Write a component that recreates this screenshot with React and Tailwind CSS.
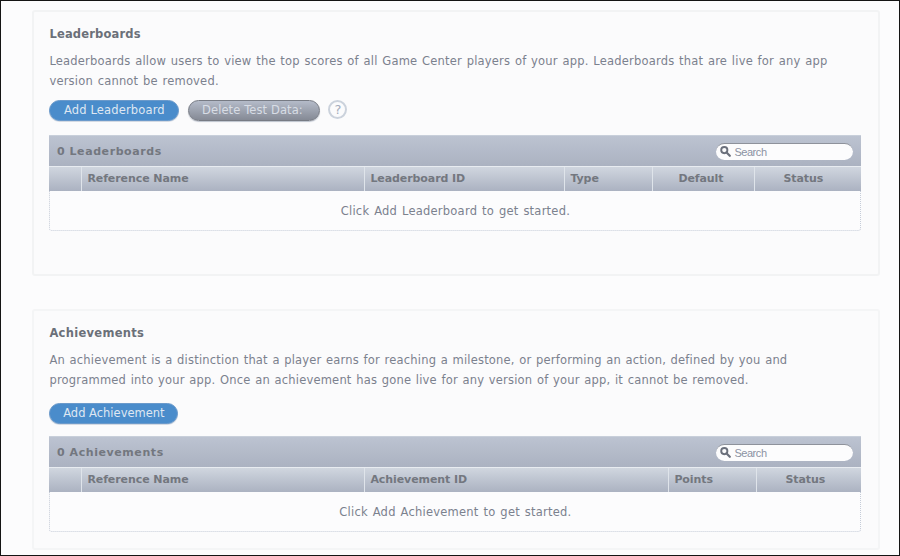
const leaderboards = {
  title: 'Leaderboards',
  titleCls: 'tracking-[0.18px]',
  lines: [
    { text: 'Leaderboards allow users to view the top scores of all Game Center players of your app. Leaderboards that are live for any app', cls: 'tracking-[0.2px] [word-spacing:0.86px]' },
    { text: 'version cannot be removed.', cls: 'tracking-[0.2px] [word-spacing:0.86px]' },
  ],
  count: '0 Leaderboards',
  empty: 'Click Add Leaderboard to get started.',
  grid: 'grid-cols-[32px_283px_200px_88px_102px_106px]',
  columns: [
    { label: '', cls: '' },
    { label: 'Reference Name', cls: 'pl-[5px]' },
    { label: 'Leaderboard ID', cls: 'pl-[5px]' },
    { label: 'Type', cls: 'pl-[5px]' },
    { label: 'Default', cls: 'pl-[25px]' },
    { label: 'Status', cls: 'pl-[28px]' },
  ],
};

const achievements = {
  title: 'Achievements',
  titleCls: 'tracking-[0.3px]',
  lines: [
    { text: 'An achievement is a distinction that a player earns for reaching a milestone, or performing an action, defined by you and', cls: 'tracking-[0.2px] [word-spacing:0.7px]' },
    { text: 'programmed into your app. Once an achievement has gone live for any version of your app, it cannot be removed.', cls: 'tracking-[0.2px] [word-spacing:0.74px]' },
  ],
  count: '0 Achievements',
  empty: 'Click Add Achievement to get started.',
  grid: 'grid-cols-[32px_283px_304px_88px_104px]',
  columns: [
    { label: '', cls: '' },
    { label: 'Reference Name', cls: 'pl-[5px]' },
    { label: 'Achievement ID', cls: 'pl-[5px]' },
    { label: 'Points', cls: 'pl-[5px]' },
    { label: 'Status', cls: 'pl-[28px]' },
  ],
};

function SearchField() {
  return (
    <div className="mr-2 flex h-[17px] w-[137px] items-center rounded-full border-t border-[#8e929b] bg-[#fcfcfd] pl-1">
      <svg width="11" height="11" viewBox="0 0 11 11" fill="none" stroke="#6b707c">
        <circle cx="4.3" cy="4.1" r="3.1" strokeWidth="1.9" />
        <path d="M6.6 6.5L9.8 9.8" strokeWidth="2.2" strokeLinecap="round" />
      </svg>
      <span className="ml-[3px] font-['Liberation_Sans',Arial,sans-serif] text-[11px] leading-[14px] tracking-[-0.45px] text-[#8b92a3]">Search</span>
    </div>
  );
}

function Table({ data }) {
  return (
    <div className="w-[812px]">
      <div className="flex h-[31px] items-center justify-between border-t border-[#c8cfda] bg-linear-to-b from-[#bcc3d1] to-[#abb2c1]">
        <h3 className="pl-[7.5px] pt-[2px] text-[11px] font-bold tracking-[0.58px] text-[#73777f]">{data.count}</h3>
        <SearchField />
      </div>
      <div className={`grid h-[25px] border-t border-[#e8ecf1] bg-linear-to-b from-[#d0d6df] to-[#abb2c1] ${data.grid}`}>
        {data.columns.map((column, i) => (
          <div
            key={i}
            className={`flex items-center whitespace-nowrap pt-px text-[11px] font-bold tracking-[-0.08px] text-[#73777f] ${i ? 'border-l border-[#dfe4ea]' : ''} ${column.cls}`}
          >
            {column.label}
          </div>
        ))}
      </div>
      <div className="flex h-[40px] items-center justify-center rounded-b-[3px] border border-t-0 border-dotted border-[#c5ccd8] bg-[#fcfcfd] pt-[3px] text-[11.5px] tracking-[0.23px] text-[#7b818e] [word-spacing:1px]">
        {data.empty}
      </div>
    </div>
  );
}

function Intro({ data }) {
  return (
    <>
      <h2 className={`text-[11.5px] font-bold leading-[17px] text-[#6b7079] ${data.titleCls}`}>{data.title}</h2>
      <div className="mt-2 whitespace-nowrap text-[11.5px] leading-[20px] text-[#7b818e]">
        {data.lines.map((line) => (
          <p key={line.text} className={line.cls}>{line.text}</p>
        ))}
      </div>
    </>
  );
}

const blueButton =
  'flex h-[21px] items-center justify-center rounded-full border border-[#6b9acb] bg-[#4a8ccb] pt-px text-[11.5px] text-[#dfe7f2] shadow-[0_1px_0_#d4dae3]';

export default function App() {
  return (
    <main className="h-[556px] w-[900px] overflow-hidden border border-[#141414] bg-[#fcfcfd] pl-[31px] pt-[9px] font-['DejaVu_Sans',Verdana,sans-serif]">
      <section className="h-[266px] w-[848px] rounded-[3px] border-2 border-[#f2f3f4] bg-[#fbfbfc] pl-[15.4px] pt-[14px]">
        <Intro data={leaderboards} />
        <div className="mt-[9px] flex">
          <button className={`w-[130px] tracking-[0.15px] ${blueButton}`}>Add Leaderboard</button>
          <button className="ml-[9px] flex h-[21px] w-[132px] items-center justify-center rounded-full border border-[#777b84] bg-linear-to-b from-[#b4bbc9] to-[#858a95] pt-px pr-1 text-[11.5px] tracking-[0.1px] text-[#d8dde5] shadow-[0_1px_1px_#bcc2cd]">
            Delete Test Data:
          </button>
          <span className="ml-[8px] flex size-[19px] items-center justify-center rounded-full border-2 border-[#cbd2dc] text-[13px] text-[#a4acbb]">?</span>
        </div>
        <div className="mt-[14px]">
          <Table data={leaderboards} />
        </div>
      </section>
      <section className="mt-[33px] h-[241px] w-[848px] rounded-[3px] border-2 border-[#f4f5f6] bg-[#fbfbfc] pl-[15.4px] pt-[14px]">
        <Intro data={achievements} />
        <button className={`mt-[13px] w-[129px] ${blueButton}`}>Add Achievement</button>
        <div className="mt-[12px]">
          <Table data={achievements} />
        </div>
      </section>
    </main>
  );
}
